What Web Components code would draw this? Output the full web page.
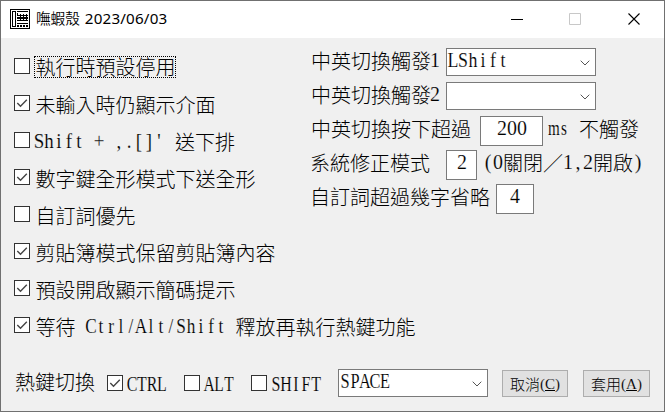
<!DOCTYPE html>
<html lang="zh-Hant">
<head>
<meta charset="utf-8">
<title>嘸蝦殼</title>
<style>
html,body{margin:0;height:100%;overflow:hidden}
body{font:300 20px/22px "Noto Sans CJK TC","Liberation Serif",sans-serif;color:#000}
</style>
</head>
<body>
<app-window></app-window>
<script>
const define = (name, html, setup) => {
  const t = document.createElement('template');
  t.innerHTML = html;
  customElements.define(name, class extends HTMLElement {
    constructor() {
      super();
      this.attachShadow({mode: 'open'}).append(t.content.cloneNode(true));
    }
    connectedCallback() { if (setup) setup(this, this.shadowRoot); }
  });
};

/* Half-width text: one glyph per cell; "s" is the horizontal squeeze */
define('half-text', `<style>
:host{display:inline-block;height:22px;vertical-align:top}
svg{display:block;overflow:visible}
text{font:400 21px "Liberation Serif",serif;text-anchor:middle;white-space:pre;stroke:var(--ground,#f0f0f0);stroke-width:.15px}
</style><svg height="22"><text y="17"></text></svg>`, (el, root) => {
  const value = el.getAttribute('text');
  const s = +(el.getAttribute('s') || .95);
  const chars = [...value];
  const t = root.querySelector('text');
  root.querySelector('svg').setAttribute('width', chars.length * 10);
  t.setAttribute('transform', `scale(${s} 1)`);
  t.setAttribute('x', chars.map((c, i) => ((i * 10 + 5) / s).toFixed(2)).join(' '));
  t.textContent = value;
});

define('check-box', `<style>
:host{display:flex;height:22px;align-items:flex-start}
.box{box-sizing:border-box;width:16px;height:16px;border:1px solid #333;background:#fff;margin-right:4px;flex:none}
svg{display:none;width:14px;height:14px}
:host([checked]) svg{display:block}
.label{display:flex;height:22px;margin-top:var(--drop,-1px);padding-left:var(--pad,1.5px);white-space:pre}
:host([focused]) .label{outline:1px dotted #000;height:20px;line-height:20px;width:139px;margin-left:1px;padding-left:.5px}
</style><div class="box"><svg viewBox="0 0 14 14"><path d="M2.3 7 5.5 10.2 11.8 3.8" fill="none" stroke="#444" stroke-width="1.4"/></svg></div><div class="label"><slot></slot></div>`);

define('combo-box', `<style>
:host{--ground:#fff;display:flex;box-sizing:border-box;width:150px;height:28px;border:1px solid #7a7a7a;background:#fff;padding:1px 5px 0 1px;justify-content:space-between}
svg{width:10px;height:6px;margin-top:10px}
</style><span><slot></slot></span><svg viewBox="0 0 10 6"><path d="M.7.7 5 5 9.3.7" fill="none" stroke="#555" stroke-width="1"/></svg>`);

define('text-field', `<style>
:host{--ground:#fff;display:flex;box-sizing:border-box;height:30px;border:1px solid #7a7a7a;background:#fff;justify-content:center;padding-top:1px}
</style><slot></slot>`);

define('push-button', `<style>
:host{display:flex;box-sizing:border-box;width:66px;height:27px;border:1px solid #adadad;background:#e1e1e1;justify-content:center;font-size:15px;line-height:25px;white-space:pre}
.key{font:400 15px/26px "Liberation Serif",serif;-webkit-text-stroke:.1px #e1e1e1}
u{text-decoration-color:#000;text-underline-offset:1px}
</style><slot></slot><span class="key">(<u></u>)</span>`, (el, root) => {
  root.querySelector('u').textContent = el.getAttribute('key');
});

define('title-bar', `<style>
:host{display:flex;height:37px;background:#fff;padding-left:9px;align-items:flex-start}
.icon{width:20px;height:20px;margin:8px 6px 0 0}
.name{font:350 14.6px/20px "Noto Sans CJK TC",sans-serif;white-space:nowrap;margin-top:7px;display:flex;gap:5px}
.date{font:400 15.2px/20px "Noto Sans","Open Sans",sans-serif;letter-spacing:.18px}
.controls{display:flex;margin:12px 24px 0 auto;gap:46px}
.controls svg{width:12px;height:12px}
.controls svg:last-child{margin-left:1px}
</style>
<svg class="icon" viewBox="0 0 20 20" shape-rendering="crispEdges"><path d="M0 0h20v20H0z"/><path d="M1 1h18v18H1z" fill="#fff"/><path d="M2 2h4v16H2zM7 2h11v1H7zM7 4h1v3H7zM8 6h10v1H8zM7 8h11v2H7zM7 11h11v1H7zM10 5h1v6h-1zM13 5h1v6h-1zM16 5h1v6h-1zM7 14h11v1H7zM7 16h2v2H7zM10 16h2v2h-2zM13 16h2v2h-2zM16 16h2v2h-2z"/><path d="M3 3h2v14H3z" fill="#fff"/></svg>
<div class="name"><span>嘸蝦殼</span><span class="date">2023/06/03</span></div>
<div class="controls">
<svg viewBox="0 0 12 12"><path d="M0 6.5h12" stroke="#000"/></svg>
<svg viewBox="0 0 12 12"><path d="M.5.5h11v11H.5z" fill="none" stroke="#c8c8c8"/></svg>
<svg viewBox="0 0 12 12"><path d="M.5.5l11 11M11.5.5l-11 11" stroke="#000" stroke-width="1.1"/></svg>
</div>`);

define('option-list', `<style>
:host{display:grid;grid-auto-rows:37px;padding:20px 0 0 13px;width:297px}
</style>
<check-box focused>執行時預設停用</check-box>
<check-box checked>未輸入時仍顯示介面</check-box>
<check-box style="--pad:0px"><half-text text="Shift + ,.[]' " s=".9"></half-text><span style="margin-left:1px">送下排</span></check-box>
<check-box checked>數字鍵全形模式下送全形</check-box>
<check-box>自訂詞優先</check-box>
<check-box checked>剪貼簿模式保留剪貼簿內容</check-box>
<check-box checked>預設開啟顯示簡碼提示</check-box>
<check-box checked>等待<half-text text=" Ctrl/Alt/Shift " s=".82"></half-text>釋放再執行熱鍵功能</check-box>`);

define('settings-panel', `<style>
:host{display:flex;flex-direction:column;padding-top:10px;gap:4px}
.row{display:flex;height:30px;white-space:pre}
.combo{height:28px;margin-bottom:2px}
.row>span{margin-top:2px;height:22px}
.l{width:135px}
.l half-text{margin-left:-1px}
</style>
<div class="row combo"><span class="l">中英切換觸發<half-text text="1"></half-text></span><combo-box><half-text text="LShift" s=".85"></half-text></combo-box></div>
<div class="row combo"><span class="l">中英切換觸發<half-text text="2"></half-text></span><combo-box></combo-box></div>
<div class="row"><span class="l" style="width:169px">中英切換按下超過</span><text-field style="width:63px"><half-text text="200"></half-text></text-field><span style="margin-left:6px"><half-text text="ms " s=".72"></half-text>不觸發</span></div>
<div class="row"><span class="l" style="margin-left:-1px;width:136px">系統修正模式</span><text-field style="width:31px"><half-text text="2"></half-text></text-field><span style="margin-left:6px"><half-text text="(0"></half-text>關閉／<half-text text="1,2"></half-text>開啟<half-text text=")"></half-text></span></div>
<div class="row"><span class="l" style="margin-left:-1px;width:186px">自訂詞超過幾字省略</span><text-field style="width:38px"><half-text text="4"></half-text></text-field></div>`);

define('hotkey-bar', `<style>
:host{display:flex;height:43px;padding-left:14px;align-items:flex-start}
:host>*,.l,check-box,combo-box,push-button{flex:none;box-sizing:border-box}
.l{width:92px;margin-top:3px}
check-box{margin-top:7px;--pad:0px}
combo-box{margin:1px 14px 0 0}
push-button{margin-top:2px}
</style>
<span class="l">熱鍵切換</span>
<check-box checked style="width:77px"><half-text text="CTRL" s=".76"></half-text></check-box>
<check-box style="width:67px"><half-text text="ALT" s=".74"></half-text></check-box>
<check-box style="width:87px"><half-text text="SHIFT" s=".76"></half-text></check-box>
<combo-box><half-text text="SPACE" s=".78"></half-text></combo-box>
<push-button key="C" style="margin-right:15px">取消</push-button>
<push-button key="A" style="width:67px">套用</push-button>`);

define('app-window', `<style>
:host{display:flex;flex-direction:column;box-sizing:border-box;width:665px;height:412px;border:1px solid #707070;background:#f0f0f0}
main{display:flex;flex:1;min-height:0}
</style><title-bar></title-bar><main><option-list></option-list><settings-panel></settings-panel></main><hotkey-bar></hotkey-bar>`);
</script>
</body>
</html>
